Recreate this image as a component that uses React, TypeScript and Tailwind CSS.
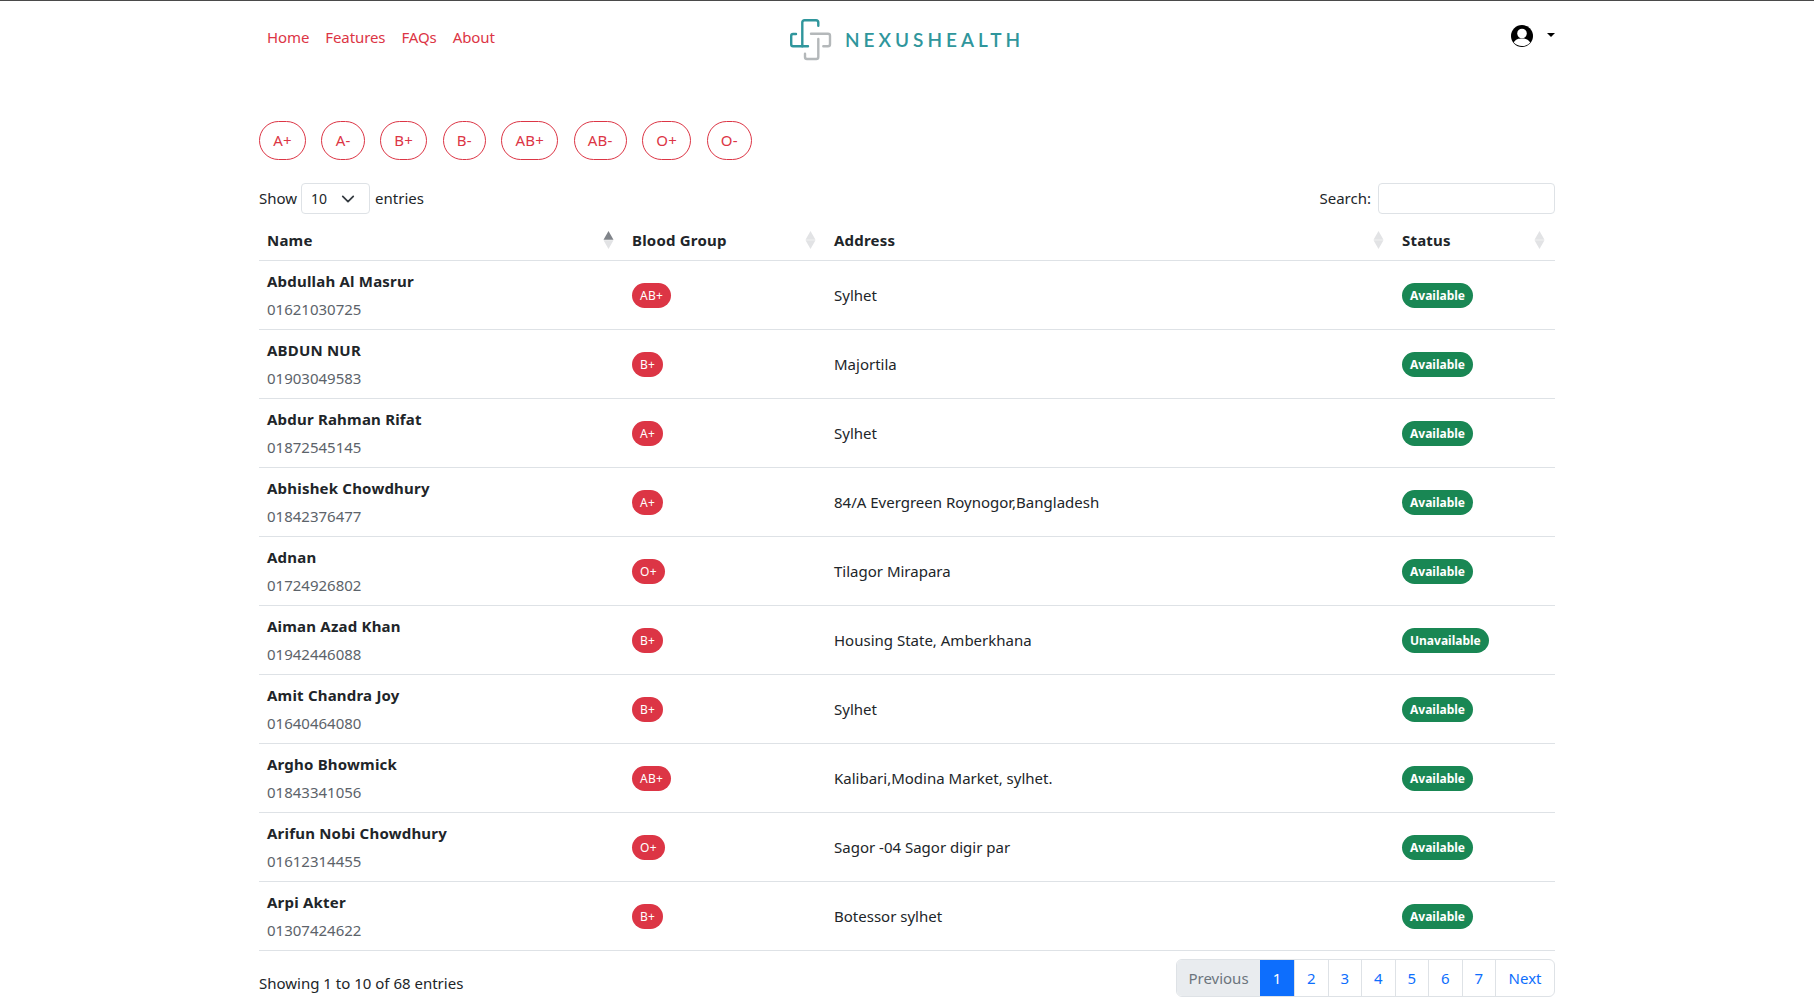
import React from 'react';

const bloodGroups = ['A+', 'A-', 'B+', 'B-', 'AB+', 'AB-', 'O+', 'O-'];

const donors = [
  { name: 'Abdullah Al Masrur', phone: '01621030725', group: 'AB+', address: 'Sylhet', status: 'Available' },
  { name: 'ABDUN NUR', phone: '01903049583', group: 'B+', address: 'Majortila', status: 'Available' },
  { name: 'Abdur Rahman Rifat', phone: '01872545145', group: 'A+', address: 'Sylhet', status: 'Available' },
  { name: 'Abhishek Chowdhury', phone: '01842376477', group: 'A+', address: '84/A Evergreen Roynogor,Bangladesh', status: 'Available' },
  { name: 'Adnan', phone: '01724926802', group: 'O+', address: 'Tilagor Mirapara', status: 'Available' },
  { name: 'Aiman Azad Khan', phone: '01942446088', group: 'B+', address: 'Housing State, Amberkhana', status: 'Unavailable' },
  { name: 'Amit Chandra Joy', phone: '01640464080', group: 'B+', address: 'Sylhet', status: 'Available' },
  { name: 'Argho Bhowmick', phone: '01843341056', group: 'AB+', address: 'Kalibari,Modina Market, sylhet.', status: 'Available' },
  { name: 'Arifun Nobi Chowdhury', phone: '01612314455', group: 'O+', address: 'Sagor -04 Sagor digir par', status: 'Available' },
  { name: 'Arpi Akter', phone: '01307424622', group: 'B+', address: 'Botessor sylhet', status: 'Available' },
];

const SortIcon: React.FC<{ active?: boolean }> = ({ active }) => (
  <svg width="11" height="18" viewBox="0 0 11 18" className="shrink-0">
    <path d="M5.5 0 L10.5 8.8 H0.5 Z" fill={active ? '#80848a' : '#e2e3e5'} />
    <path d="M5.5 18 L10.5 9.2 H0.5 Z" fill="#e2e3e5" />
  </svg>
);

const Logo = () => (
  <svg width="42" height="42" viewBox="0 0 42 42" fill="none" strokeWidth="2.4" strokeLinejoin="round" strokeLinecap="round">
    <path d="M12.3 27.3 V3.5 Q12.3 1.2 14.6 1.2 H26 Q28.3 1.2 28.3 3.5 V6.7" stroke="#2f969c" />
    <path d="M6 15 H3 Q1.2 15 1.2 17 V25.3 Q1.2 27.3 3 27.3 H18" stroke="#2f969c" />
    <path d="M21 14.7 H38 Q40 14.7 40 16.7 V25.3 Q40 27.3 38 27.3 H33.3" stroke="#b4b8ba" />
    <path d="M28.3 20 V38 Q28.3 40 26.3 40 H17 Q15 40 15 38 V34.7" stroke="#b4b8ba" />
  </svg>
);

const Avatar = () => (
  <svg width="24" height="24" viewBox="0 0 24 24" className="rounded-full">
    <circle cx="12" cy="12" r="11" fill="#000" />
    <circle cx="12" cy="9.5" r="4.8" fill="#fff" />
    <path d="M3.8 18.6 C5.5 15.2 8.5 14.6 12 14.6 C15.5 14.6 18.5 15.2 20.2 18.6 C18.2 21 15.3 22 12 22 C8.7 22 5.8 21 3.8 18.6 Z" fill="#fff" />
  </svg>
);

export default function App() {
  return (
    <div className="min-h-[1004px] bg-white border-t border-[#4a4a4a] font-['Noto_Sans',sans-serif] text-[15px] text-[#212529]">
      <div className="w-[1320px] mx-auto px-3">
        {/* Navbar */}
        <nav className="h-[78px] flex items-start relative">
          <ul className="flex gap-4 pl-2 pt-[25px] text-[#dc3545] tracking-[-0.1px]">
            <li>Home</li>
            <li>Features</li>
            <li>FAQs</li>
            <li>About</li>
          </ul>
          <div className="absolute left-[531px] top-[18px] flex items-center gap-[13px]">
            <Logo />
            <span className="font-['Lato',sans-serif] text-[19px] font-semibold tracking-[4px] text-[#2f969c]">NEXUSHEALTH</span>
          </div>
          <div className="ml-auto flex items-start gap-[13px] pt-[23px]">
            <Avatar />
            <span className="mt-[9px] w-0 h-0 border-x-[4.5px] border-x-transparent border-t-[4.5px] border-t-black" />
          </div>
        </nav>

        {/* Blood group filters */}
        <div className="flex gap-[15.3px] mt-[42px]">
          {bloodGroups.map((group) => (
            <button key={group} className="h-[39px] px-[13.3px] rounded-[20px] border border-[#dc3545] text-[#dc3545] tracking-[0.15px]">
              {group}
            </button>
          ))}
        </div>

        {/* Length + search */}
        <div className="flex items-center justify-between mt-[23px] h-[31px]">
          <div className="flex items-center">
            <span>Show</span>
            <span className="ml-[4px] mr-[5px] w-[69px] h-[31px] border border-[#dee2e6] rounded flex items-center justify-between pl-[9px] pr-[14px] text-sm">
              10
              <svg width="14" height="14" viewBox="0 0 16 16" fill="none" stroke="#343a40" strokeWidth="2" strokeLinecap="round" strokeLinejoin="round">
                <path d="m2 5 6 6 6-6" />
              </svg>
            </span>
            <span>entries</span>
          </div>
          <div className="flex items-center gap-[7px]">
            <span>Search:</span>
            <span className="block w-[177px] h-[31px] border border-[#dee2e6] rounded" />
          </div>
        </div>

        {/* Table */}
        <table className="w-full table-fixed border-collapse mt-[7px]">
          <colgroup>
            <col className="w-[365px]" />
            <col className="w-[202px]" />
            <col className="w-[568px]" />
            <col className="w-[161px]" />
          </colgroup>
          <thead>
            <tr className="border-b border-[#dee2e6] h-[39px]">
              {['Name', 'Blood Group', 'Address', 'Status'].map((head, i) => (
                <th key={head} className="pl-2 pr-[10px] text-left font-bold tracking-[0.2px]">
                  <div className="flex items-center justify-between">
                    {head}
                    <SortIcon active={i === 0} />
                  </div>
                </th>
              ))}
            </tr>
          </thead>
          <tbody>
            {donors.map((donor) => (
              <tr key={donor.name} className="border-b border-[#dee2e6] h-[69px]">
                <td className="px-2">
                  <div className="font-bold tracking-[0.2px] mt-[1px]">{donor.name}</div>
                  <div className="mt-[5px] text-[#5c636a]">{donor.phone}</div>
                </td>
                <td className="px-2 pt-[2px]">
                  <span className="inline-block px-[8px] py-[4px] rounded-full bg-[#dc3545] text-white text-[12px] leading-[17px] tracking-[0.3px]">{donor.group}</span>
                </td>
                <td className="px-2 pt-[2px]">{donor.address}</td>
                <td className="px-2 pt-[2px]">
                  <span className="inline-block px-[8px] py-[4px] rounded-full bg-[#198754] text-white text-[12px] font-bold leading-[17px]">{donor.status}</span>
                </td>
              </tr>
            ))}
          </tbody>
        </table>

        {/* Footer */}
        <div className="flex items-start justify-between mt-2">
          <span className="mt-[13px]">Showing 1 to 10 of 68 entries</span>
          <div className="flex h-[38px] border border-[#dee2e6] rounded-md overflow-hidden">
            <span className="flex items-center px-[11.5px] pt-[1px] bg-[#e9ecef] text-[#6c757d]">Previous</span>
            <span className="flex items-center justify-center pt-[1px] w-[34px] bg-[#0d6efd] text-white">1</span>
            {['2', '3', '4', '5', '6', '7'].map((page) => (
              <span key={page} className="flex items-center justify-center pt-[1px] w-[33.5px] border-l border-[#dee2e6] text-[#0d6efd]">{page}</span>
            ))}
            <span className="flex items-center px-[12.5px] pt-[1px] border-l border-[#dee2e6] text-[#0d6efd]">Next</span>
          </div>
        </div>
      </div>
    </div>
  );
}
